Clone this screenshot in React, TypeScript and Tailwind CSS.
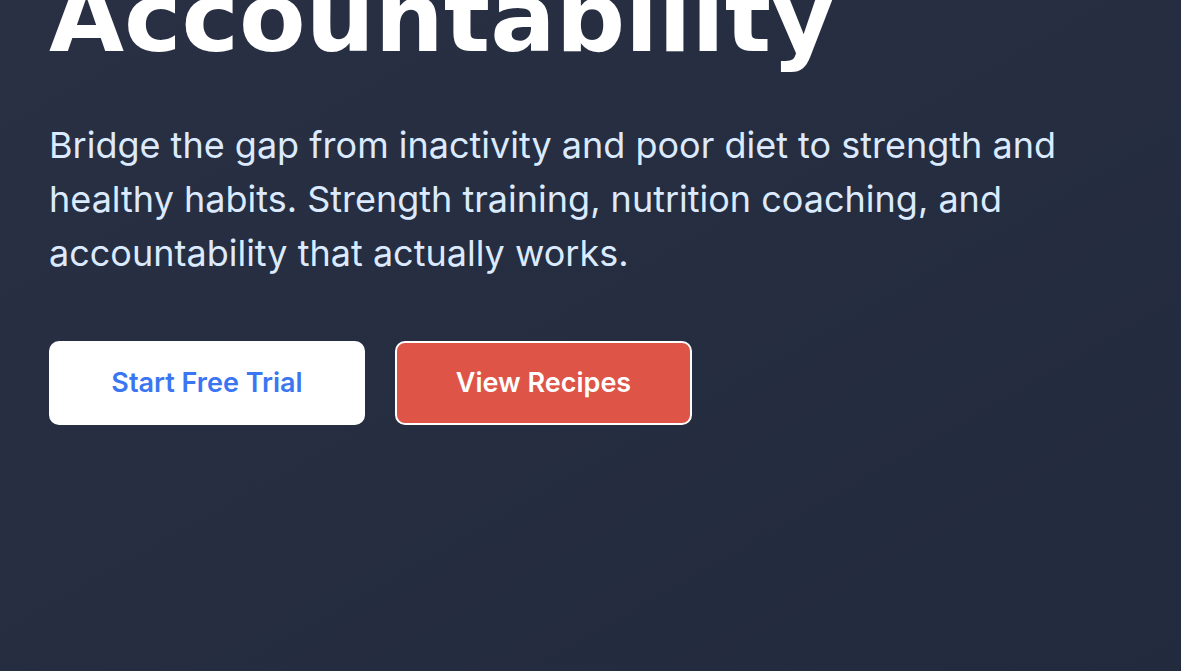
export default function App() {
  return (
    <main className="h-[671px] w-full overflow-hidden bg-gradient-to-br from-[#293043] to-[#222a3d]">
      <section className="px-[49px]">
        <h1 className="-mt-[31px] text-[97px] font-bold leading-none text-white font-['DejaVu_Sans',sans-serif]">
          Accountability
        </h1>
        <p className="mt-[52px] max-w-[1080px] text-[36px] leading-[54px] text-[#dbeafe] font-['Inter',sans-serif]">
          Bridge the gap from inactivity and poor diet to strength and healthy habits. Strength training, nutrition coaching, and accountability that actually works.
        </p>
        <div className="mt-[61px] flex gap-[30px]">
          <button className="flex h-[84px] w-[316px] items-center justify-center rounded-[10px] bg-white text-[27px] font-semibold text-[#3b76f2] font-['Inter',sans-serif]">
            Start Free Trial
          </button>
          <button className="flex h-[84px] w-[297px] items-center justify-center rounded-[10px] border-2 border-white bg-[#de5447] text-[27px] font-semibold text-white font-['Inter',sans-serif]">
            View Recipes
          </button>
        </div>
      </section>
    </main>
  );
}
